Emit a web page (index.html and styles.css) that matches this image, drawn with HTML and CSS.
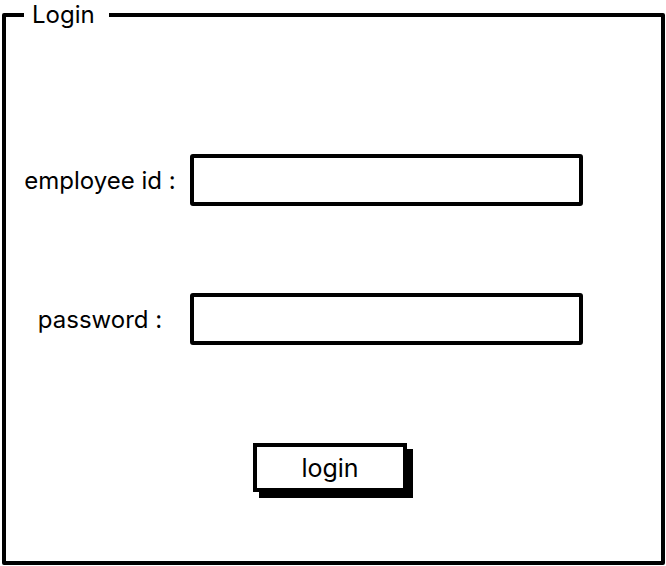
FILE: index.html
```html
<!DOCTYPE html>
<html lang="en">
<head>
    <meta charset="UTF-8">
    <title>Login</title>
    <link rel="stylesheet" href="styles.css">
</head>
<body>
    <!--login frame-->
    <fieldset class="login-box">
        <legend class="login-title">Login</legend>

        <div class="field-row">
            <label class="field-label" for="empId">employee id :</label>
            <input class="field-input" id="empId" type="text">
        </div>

        <div class="field-row row2">
            <label class="field-label" for="pw">password :</label>
            <input class="field-input" id="pw" type="password">
        </div>

        <div class="btn-row">
            <button class="login-btn" type="button">login</button>
        </div>
    </fieldset>
</body>
</html>
```

FILE: styles.css
```css
html,
body {
    margin: 0;
    padding: 0;
}

body {
    background: #fff;
    font-family: Inter, "Open Sans", sans-serif;
    color: #000;
}

/*frame*/
.login-box {
    box-sizing: border-box;
    width: 663px;
    height: 565px;
    margin: 0 0 0 2px;
    padding: 124px 0 0;
    border: 4px solid #000;
    border-radius: 2px;
}

.login-title {
    margin-left: 18px;
    padding: 0 14px 0 8px;
    font-size: 24px;
    line-height: 30px;
}

/*rows*/
.field-row {
    display: grid;
    grid-template-columns: 184px 393px;
    align-items: center;
}

.row2 {
    margin-top: 87px;
}

.field-label {
    padding-left: 4px;
    text-align: center;
    font-size: 24px;
}

.field-input {
    box-sizing: border-box;
    width: 393px;
    height: 52px;
    margin: 0;
    border: 4px solid #000;
    border-radius: 3px;
    background: #fff;
    font: 20px Inter, sans-serif;
    padding: 0 10px;
    outline: none;
}

/*button*/
.btn-row {
    display: flex;
    justify-content: center;
    margin-top: 98px;
    padding-right: 7px;
}

.login-btn {
    box-sizing: border-box;
    width: 154px;
    height: 49px;
    border: 4px solid #000;
    background: #fff;
    box-shadow: 6px 6px 0 #000;
    font-family: Inter, "Open Sans", sans-serif;
    font-size: 25px;
    color: #000;
    padding: 0;
    cursor: pointer;
}
```
